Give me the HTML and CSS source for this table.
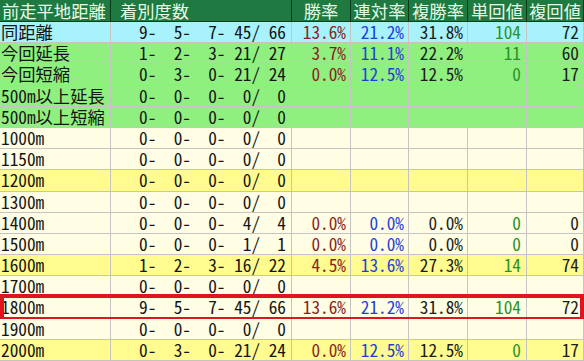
FILE: index.html
```html
<!DOCTYPE html>
<html lang="ja">
<head>
<meta charset="utf-8">
<title>前走平地距離</title>
<link rel="stylesheet" href="styles.css">
</head>
<body>
<div class="table">
  <div class="row head">
    <div class="c label">前走平地距離</div>
    <div class="c count">着別度数</div>
    <div class="c">勝率</div>
    <div class="c">連対率</div>
    <div class="c">複勝率</div>
    <div class="c">単回値</div>
    <div class="c">複回値</div>
  </div>
  <div class="row cyan">
    <div class="c label">同距離</div>
    <div class="c count"> 9-  5-  7- 45/ 66</div>
    <div class="c win">13.6%</div><div class="c ren">21.2%</div><div class="c fuku">31.8%</div><div class="c tan">104</div><div class="c fk">72</div>
  </div>
  <div class="row green">
    <div class="c label">今回延長</div>
    <div class="c count"> 1-  2-  3- 21/ 27</div>
    <div class="c win">3.7%</div><div class="c ren">11.1%</div><div class="c fuku">22.2%</div><div class="c tan">11</div><div class="c fk">60</div>
  </div>
  <div class="row green">
    <div class="c label">今回短縮</div>
    <div class="c count"> 0-  3-  0- 21/ 24</div>
    <div class="c win">0.0%</div><div class="c ren">12.5%</div><div class="c fuku">12.5%</div><div class="c tan">0</div><div class="c fk">17</div>
  </div>
  <div class="row green">
    <div class="c label">500m以上延長</div>
    <div class="c count"> 0-  0-  0-  0/  0</div>
    <div class="c"></div><div class="c"></div><div class="c"></div><div class="c"></div><div class="c"></div>
  </div>
  <div class="row green">
    <div class="c label">500m以上短縮</div>
    <div class="c count"> 0-  0-  0-  0/  0</div>
    <div class="c"></div><div class="c"></div><div class="c"></div><div class="c"></div><div class="c"></div>
  </div>
  <div class="row cream">
    <div class="c label">1000m</div>
    <div class="c count"> 0-  0-  0-  0/  0</div>
    <div class="c"></div><div class="c"></div><div class="c"></div><div class="c"></div><div class="c"></div>
  </div>
  <div class="row cream">
    <div class="c label">1150m</div>
    <div class="c count"> 0-  0-  0-  0/  0</div>
    <div class="c"></div><div class="c"></div><div class="c"></div><div class="c"></div><div class="c"></div>
  </div>
  <div class="row yellow">
    <div class="c label">1200m</div>
    <div class="c count"> 0-  0-  0-  0/  0</div>
    <div class="c"></div><div class="c"></div><div class="c"></div><div class="c"></div><div class="c"></div>
  </div>
  <div class="row cream">
    <div class="c label">1300m</div>
    <div class="c count"> 0-  0-  0-  0/  0</div>
    <div class="c"></div><div class="c"></div><div class="c"></div><div class="c"></div><div class="c"></div>
  </div>
  <div class="row cream">
    <div class="c label">1400m</div>
    <div class="c count"> 0-  0-  0-  4/  4</div>
    <div class="c win">0.0%</div><div class="c ren">0.0%</div><div class="c fuku">0.0%</div><div class="c tan">0</div><div class="c fk">0</div>
  </div>
  <div class="row cream">
    <div class="c label">1500m</div>
    <div class="c count"> 0-  0-  0-  1/  1</div>
    <div class="c win">0.0%</div><div class="c ren">0.0%</div><div class="c fuku">0.0%</div><div class="c tan">0</div><div class="c fk">0</div>
  </div>
  <div class="row yellow">
    <div class="c label">1600m</div>
    <div class="c count"> 1-  2-  3- 16/ 22</div>
    <div class="c win">4.5%</div><div class="c ren">13.6%</div><div class="c fuku">27.3%</div><div class="c tan">14</div><div class="c fk">74</div>
  </div>
  <div class="row cream">
    <div class="c label">1700m</div>
    <div class="c count"> 0-  0-  0-  0/  0</div>
    <div class="c"></div><div class="c"></div><div class="c"></div><div class="c"></div><div class="c"></div>
  </div>
  <div class="row cream marked">
    <div class="c label">1800m</div>
    <div class="c count"> 9-  5-  7- 45/ 66</div>
    <div class="c win">13.6%</div><div class="c ren">21.2%</div><div class="c fuku">31.8%</div><div class="c tan">104</div><div class="c fk">72</div>
  </div>
  <div class="row cream">
    <div class="c label">1900m</div>
    <div class="c count"> 0-  0-  0-  0/  0</div>
    <div class="c"></div><div class="c"></div><div class="c"></div><div class="c"></div><div class="c"></div>
  </div>
  <div class="row yellow">
    <div class="c label">2000m</div>
    <div class="c count"> 0-  3-  0- 21/ 24</div>
    <div class="c win">0.0%</div><div class="c ren">12.5%</div><div class="c fuku">12.5%</div><div class="c tan">0</div><div class="c fk">17</div>
  </div>
</div>
</body>
</html>
```
FILE: styles.css
```css
html, body {
  margin: 0;
  padding: 0;
  background: #ffffff;
}
.table {
  width: 584px;
  font-family: "Noto Sans Mono CJK JP", "Noto Sans CJK JP", "DejaVu Sans Mono", monospace;
  font-feature-settings: "hwid" 1;
  font-size: 17.3px;
  color: #141414;
}
.row {
  position: relative;
  display: grid;
  grid-template-columns: 111px 181px 59px 58px 59px 59px 57px;
  height: 21.1875px;
  box-sizing: border-box;
  border-bottom: 1px solid #c4c4c4;
}
.row.head {
  height: 22px;
  background: #1f7a41;
  color: #e6fbe6;
  border-bottom: 1px solid #0d3d1e;
}
.c {
  box-sizing: border-box;
  border-right: 1px solid #c4c4c4;
  padding-right: 4px;
  text-align: right;
  white-space: pre;
  line-height: 20px;
}
.head .c {
  border-right-color: #0b3a1b;
  text-align: center;
  padding: 0;
  line-height: 21px;
}
.head .c.label {
  text-align: left;
  padding-left: 2px;
}
.head .c.count {
  text-align: left;
  padding-left: 9px;
}
.c.label {
  text-align: left;
  padding-left: 1px;
  padding-right: 0;
}
.c.count {
  padding-right: 5px;
}
.c.tan {
  padding-right: 5px;
}
.cyan { background: #a8f2fc; }
.green { background: #8ff07f; }
.cream { background: #fffde4; }
.yellow { background: #fffb8e; }
.win { color: #8a1f1f; }
.ren { color: #1f3fd6; }
.fuku { color: #1c1c1c; }
.tan { color: #2a922a; }
.fk { color: #1c1c1c; }
.marked::after {
  content: "";
  position: absolute;
  left: 0;
  right: 0;
  top: -3px;
  bottom: -3px;
  border: 4px solid #e0141e;
  pointer-events: none;
}
```
